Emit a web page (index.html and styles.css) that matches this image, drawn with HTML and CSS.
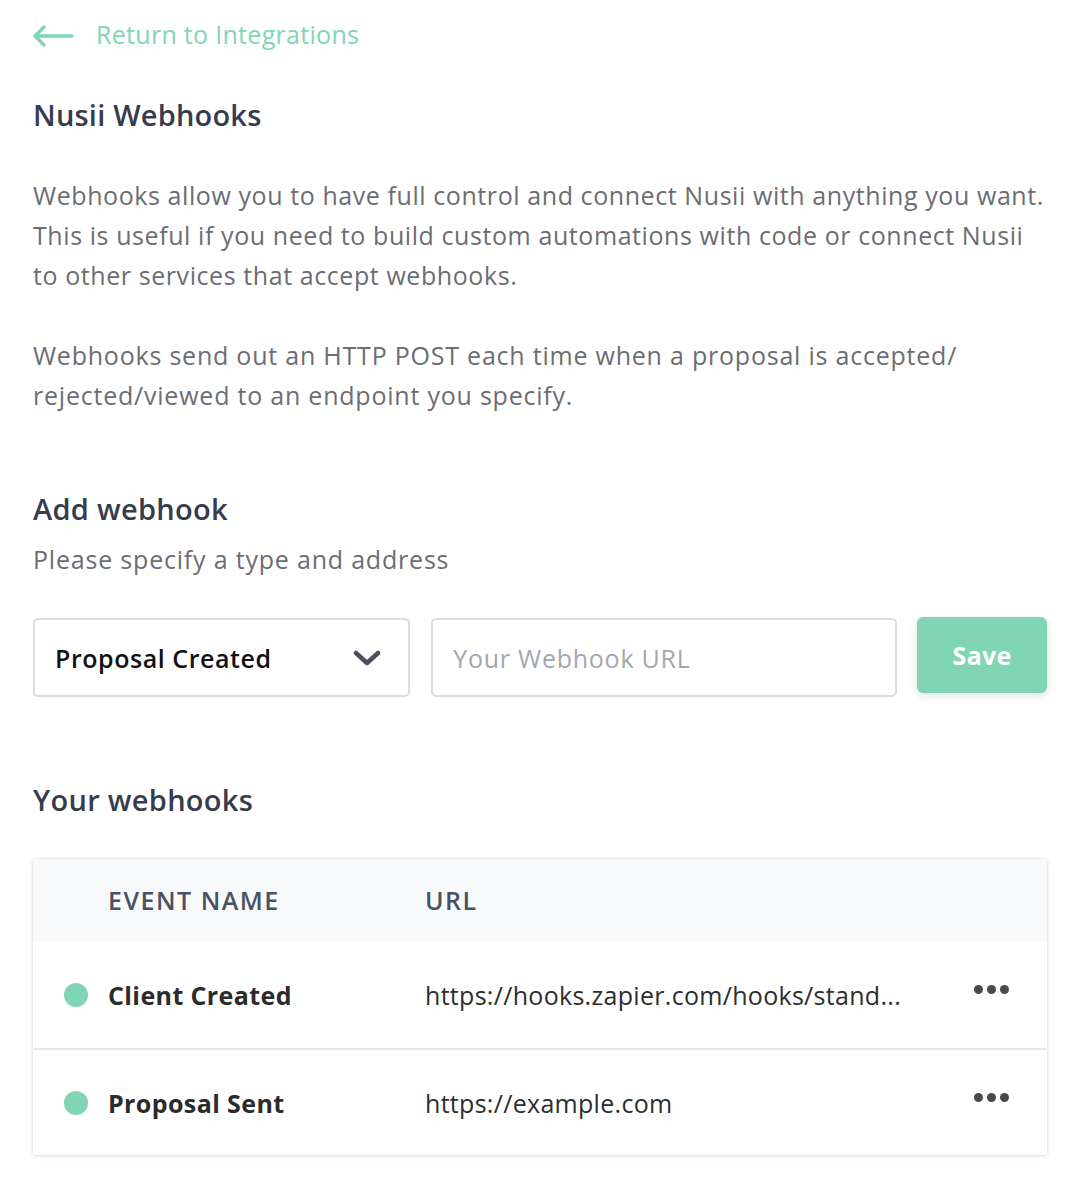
FILE: index.html
```html
<!DOCTYPE html>
<html lang="en">
<head>
<meta charset="utf-8">
<title>Nusii Webhooks</title>
<link rel="stylesheet" href="styles.css">
</head>
<body>
<div class="page">
  <a class="back" href="#">
    <svg class="back-arrow" width="42" height="24" viewBox="0 0 42 24" fill="none" stroke="#7fd5b4" stroke-width="3.4" stroke-linecap="round" stroke-linejoin="round">
      <path d="M40 12H3"/>
      <path d="M12 3L3 12L12 21"/>
    </svg>
    <span>Return to Integrations</span>
  </a>

  <h1 class="title">Nusii Webhooks</h1>

  <p class="desc">Webhooks allow you to have full control and connect Nusii with anything you want.<br>This is useful if you need to build custom automations with code or connect Nusii<br>to other services that accept webhooks.</p>
  <p class="desc desc-second">Webhooks send out an HTTP POST each time when a proposal is accepted/<br>rejected/viewed to an endpoint you specify.</p>

  <h2 class="section-title add-title">Add webhook</h2>
  <p class="subtitle">Please specify a type and address</p>

  <div class="form-row">
    <div class="select">
      <span>Proposal Created</span>
      <svg class="chevron" width="28" height="18" viewBox="0 0 28 18" fill="none" stroke="#4b5061" stroke-width="4.5" stroke-linecap="round" stroke-linejoin="round">
        <path d="M3 4L14 14L25 4"/>
      </svg>
    </div>
    <div class="url-input">Your Webhook URL</div>
    <button class="save">Save</button>
  </div>

  <h2 class="section-title hooks-title">Your webhooks</h2>

  <div class="table">
    <div class="row head">
      <div class="c-dot"></div>
      <div class="c-name">EVENT NAME</div>
      <div class="c-url">URL</div>
      <div class="c-menu"></div>
    </div>
    <div class="row body">
      <div class="c-dot"><span class="dot"></span></div>
      <div class="c-name strong">Client Created</div>
      <div class="c-url">https://hooks.zapier.com/hooks/stand...</div>
      <div class="c-menu"><span class="more"><i></i><i></i><i></i></span></div>
    </div>
    <div class="row body">
      <div class="c-dot"><span class="dot"></span></div>
      <div class="c-name strong">Proposal Sent</div>
      <div class="c-url">https://example.com</div>
      <div class="c-menu"><span class="more"><i></i><i></i><i></i></span></div>
    </div>
  </div>
</div>
</body>
</html>
```

FILE: styles.css
```css
* { box-sizing: border-box; }

html, body {
  margin: 0;
  padding: 0;
  background: #ffffff;
}

body {
  font-family: "Open Sans", "Lato", sans-serif;
  color: #363c4e;
}

.page {
  width: 1092px;
  padding: 14px 45px 40px 33px;
}

.back {
  display: flex;
  align-items: center;
  gap: 22px;
  height: 40px;
  color: #7fd5b4;
  text-decoration: none;
  font-size: 25px;
  letter-spacing: 0.3px;
  line-height: 40px;
}

.back-arrow {
  display: block;
  margin-left: -1px;
  margin-top: 4px;
}

.title {
  margin: 41px 0 0;
  font-size: 29px;
  letter-spacing: 0.2px;
  line-height: 40px;
  font-weight: 600;
  color: #363c4e;
}

.desc {
  margin: 40px 0 0;
  font-size: 25px;
  letter-spacing: 0.58px;
  line-height: 40px;
  color: #6c6d72;
  white-space: nowrap;
}

.desc-second {
  margin-top: 40px;
  letter-spacing: 0.78px;
}

.section-title {
  margin: 0;
  font-size: 29px;
  letter-spacing: 0.3px;
  line-height: 40px;
  font-weight: 600;
  color: #363c4e;
}

.add-title { margin-top: 74px; }

.subtitle {
  margin: 10px 0 0;
  font-size: 25px;
  letter-spacing: 0.8px;
  line-height: 40px;
  color: #6c6d72;
}

.form-row {
  display: flex;
  align-items: flex-start;
  margin-top: 38px;
}

.select {
  width: 378px;
  height: 79px;
  margin-top: 1px;
  border: 2px solid #dcdcdc;
  border-radius: 5px;
  display: flex;
  align-items: center;
  justify-content: space-between;
  padding: 0 27px 0 20px;
  font-size: 25px;
  letter-spacing: 0.55px;
  font-weight: 600;
  color: #111111;
}

.chevron { display: block; }

.url-input {
  width: 467px;
  height: 79px;
  margin: 1px 0 0 21px;
  border: 2px solid #dcdcdc;
  border-radius: 5px;
  display: flex;
  align-items: center;
  padding: 0 20px;
  font-size: 25px;
  letter-spacing: 0.75px;
  color: #a3a6b0;
}

.save {
  width: 130px;
  height: 76px;
  margin-left: 20px;
  border: none;
  border-radius: 6px;
  background: #7fd5b4;
  color: #ffffff;
  font-family: inherit;
  font-size: 25px;
  letter-spacing: 0.3px;
  font-weight: 700;
  box-shadow: 0 3px 8px rgba(0, 0, 0, 0.12);
  padding: 0;
}

.hooks-title { margin-top: 83px; }

.table {
  margin-top: 39px;
  width: 1014px;
  border-radius: 3px;
  box-shadow: 0 0 3px rgba(0, 0, 0, 0.18), 0 2px 6px rgba(0, 0, 0, 0.06);
  overflow: hidden;
}

.row {
  display: grid;
  grid-template-columns: 75px 317px 1fr 110px;
  align-items: center;
}

.row.head {
  height: 82px;
  background: #f8f9fa;
  font-size: 25px;
  letter-spacing: 1.5px;
  font-weight: 600;
  color: #4a5162;
}

.row.body {
  height: 107px;
  font-size: 25px;
  letter-spacing: 0.3px;
  color: #2d2d2d;
  background: #ffffff;
}

.row.body + .row.body {
  border-top: 2px solid #e6e7ea;
  height: 107px;
}

.c-dot {
  display: flex;
  justify-content: flex-end;
  padding-right: 20px;
}

.dot {
  width: 24px;
  height: 24px;
  border-radius: 50%;
  background: #7fd5b4;
  display: block;
}

.strong {
  font-weight: 700;
  letter-spacing: 0.4px;
  color: #2b2b2b;
}

.c-url {
  white-space: nowrap;
  overflow: hidden;
}

.c-menu {
  display: flex;
  justify-content: flex-start;
  padding-left: 37px;
}

.more {
  display: flex;
  gap: 4px;
  margin-top: -10px;
}

.more i {
  display: block;
  width: 9px;
  height: 9px;
  border-radius: 50%;
  background: #4a4a4a;
}
```
